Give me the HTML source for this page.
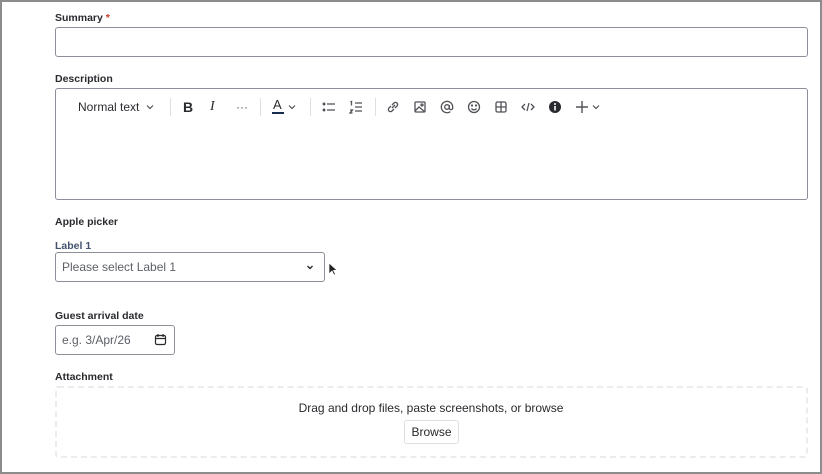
<!DOCTYPE html>
<html><head><style>
*{box-sizing:border-box;margin:0;padding:0}
body{width:822px;height:474px;background:#fff;font-family:"Liberation Sans",sans-serif;color:#172b4d;position:relative;overflow:hidden}
.frame{position:absolute;left:0;top:0;width:822px;height:474px;border:2px solid #8c8c8c}
.lbl{position:absolute;left:55px;font-size:10.5px;font-weight:bold;color:#292a2e}
.box{position:absolute;border:1px solid #8c8f97;border-radius:3px;background:#fff}
.ph{position:absolute;font-size:12px;color:#5e6068}
.sep{position:absolute;top:98px;width:1px;height:18px;background:#dcdfe4}
svg{position:absolute}
</style></head><body>
<div class="frame"></div>
<div class="lbl" style="top:12px">Summary <span style="color:#c9372c">*</span></div>
<div class="box" style="left:55px;top:27px;width:753px;height:30px"></div>
<div class="lbl" style="top:73px">Description</div>
<div class="box" style="left:55px;top:88px;width:753px;height:112px"></div>
<div class="ph" style="left:78px;top:100px;color:#292a2e;font-size:12px">Normal text</div>
<svg style="left:145px;top:102px" width="10" height="10" viewBox="0 0 10 10"><path d="M2 3.5l3 3 3-3" fill="none" stroke="#505258" stroke-width="1.2"/></svg>
<div class="sep" style="left:170px"></div>
<div class="ph" style="left:183px;top:99px;font-weight:bold;font-size:14px;color:#292a2e">B</div>
<div class="ph" style="left:210px;top:99px;font-style:italic;font-size:14px;color:#292a2e;font-family:'Liberation Serif',serif">I</div>
<div class="ph" style="left:236px;top:100px;font-size:12px;color:#505258">···</div>
<div class="sep" style="left:260px"></div>
<div class="ph" style="left:273px;top:97px;font-size:13px;color:#292a2e">A</div>
<div style="position:absolute;left:272px;top:112px;width:12px;height:2px;background:#172b4d"></div>
<svg style="left:287px;top:102px" width="10" height="10" viewBox="0 0 10 10"><path d="M2 3.5l3 3 3-3" fill="none" stroke="#505258" stroke-width="1.2"/></svg>
<div class="sep" style="left:310px"></div>
<svg style="left:322px;top:100px" width="14" height="14" viewBox="0 0 14 14" stroke="#505258" stroke-width="1.3"><path d="M5 4h8M5 10h8"/><circle cx="2" cy="4" r=".8"/><circle cx="2" cy="10" r=".8"/></svg>
<svg style="left:349px;top:100px" width="14" height="14" viewBox="0 0 14 14" stroke="#505258" stroke-width="1.3" fill="none"><path d="M6 3h7M6 7h7M6 11h7M1.5 2l1-.5v4M1 10h2.5L1 13h2.5"/></svg>
<div class="sep" style="left:375px"></div>
<svg style="left:386px;top:100px" width="14" height="14" viewBox="0 0 14 14" stroke="#505258" stroke-width="1.3" fill="none"><path d="M6 8l3-3M5 6L3 8a2 2 0 003 3l2-2M9 8l2-2a2 2 0 00-3-3L6 5"/></svg>
<svg style="left:413px;top:100px" width="14" height="14" viewBox="0 0 14 14" stroke="#505258" stroke-width="1.3" fill="none"><rect x="2" y="2" width="10" height="10" rx="1"/><path d="M2 11l4-4 6 5"/><circle cx="9" cy="5" r="1"/></svg>
<svg style="left:440px;top:100px" width="14" height="14" viewBox="0 0 14 14" stroke="#505258" stroke-width="1.3" fill="none"><circle cx="7" cy="7" r="2.3"/><path d="M9.3 5v3a1.7 1.7 0 003.4 0V7a5.7 5.7 0 10-2.3 4.6"/></svg>
<svg style="left:467px;top:100px" width="14" height="14" viewBox="0 0 14 14" stroke="#505258" stroke-width="1.3" fill="none"><circle cx="7" cy="7" r="5.5"/><path d="M4.5 8.5a3 3 0 005 0"/><circle cx="5" cy="5.5" r=".5"/><circle cx="9" cy="5.5" r=".5"/></svg>
<svg style="left:494px;top:100px" width="14" height="14" viewBox="0 0 14 14" stroke="#505258" stroke-width="1.3" fill="none"><rect x="2" y="2" width="10" height="10" rx="1.5"/><path d="M7 2v10M2 7h10"/></svg>
<svg style="left:521px;top:100px" width="14" height="14" viewBox="0 0 14 14" stroke="#505258" stroke-width="1.3" fill="none"><path d="M4 4L1 7l3 3M10 4l3 3-3 3M8 3L6 11"/></svg>
<svg style="left:548px;top:100px" width="14" height="14" viewBox="0 0 14 14"><circle cx="7" cy="7" r="6" fill="#292a2e"/><rect x="6.2" y="6" width="1.6" height="4.5" fill="#fff"/><circle cx="7" cy="4" r="1" fill="#fff"/></svg>
<svg style="left:575px;top:100px" width="14" height="14" viewBox="0 0 14 14" stroke="#505258" stroke-width="1.4"><path d="M7 1v12M1 7h12"/></svg>
<svg style="left:591px;top:102px" width="10" height="10" viewBox="0 0 10 10"><path d="M2 3.5l3 3 3-3" fill="none" stroke="#505258" stroke-width="1.2"/></svg>
<div class="lbl" style="top:216px">Apple picker</div>
<div class="lbl" style="top:240px;color:#44546f">Label 1</div>
<div class="box" style="left:55px;top:252px;width:270px;height:30px"></div>
<div class="ph" style="left:62px;top:260px">Please select Label 1</div>
<svg style="left:305px;top:262px" width="10" height="10" viewBox="0 0 10 10"><path d="M2.5 4l2.5 2.5L7.5 4" fill="none" stroke="#292a2e" stroke-width="1.4"/></svg>
<svg style="left:328px;top:262px" width="10" height="14" viewBox="0 0 10 14"><path d="M1 1v11l3-3 2 4 1.5-.7-2-4H9z" fill="#222" stroke="#fff" stroke-width=".7"/></svg>
<div class="lbl" style="top:310px">Guest arrival date</div>
<div class="box" style="left:55px;top:325px;width:120px;height:30px"></div>
<div class="ph" style="left:62px;top:333px">e.g. 3/Apr/26</div>
<svg style="left:154px;top:333px" width="13" height="13" viewBox="0 0 13 13" stroke="#292a2e" stroke-width="1.2" fill="none"><rect x="1.5" y="2.5" width="10" height="9" rx="1.5"/><path d="M1.5 5.5h10M4 1v3M9 1v3"/></svg>
<div class="lbl" style="top:371px">Attachment</div>
<div style="position:absolute;left:55px;top:386px;width:753px;height:72px;border:2px dashed #ebecf0;border-radius:3px"></div>
<div class="ph" style="left:0;width:862px;text-align:center;top:401px;color:#292a2e">Drag and drop files, paste screenshots, or browse</div>
<div style="position:absolute;left:404px;top:420px;width:55px;height:24px;border:1px solid #dcdfe4;border-radius:3px;font-size:12px;color:#292a2e;text-align:center;line-height:22px">Browse</div>
</body></html>
